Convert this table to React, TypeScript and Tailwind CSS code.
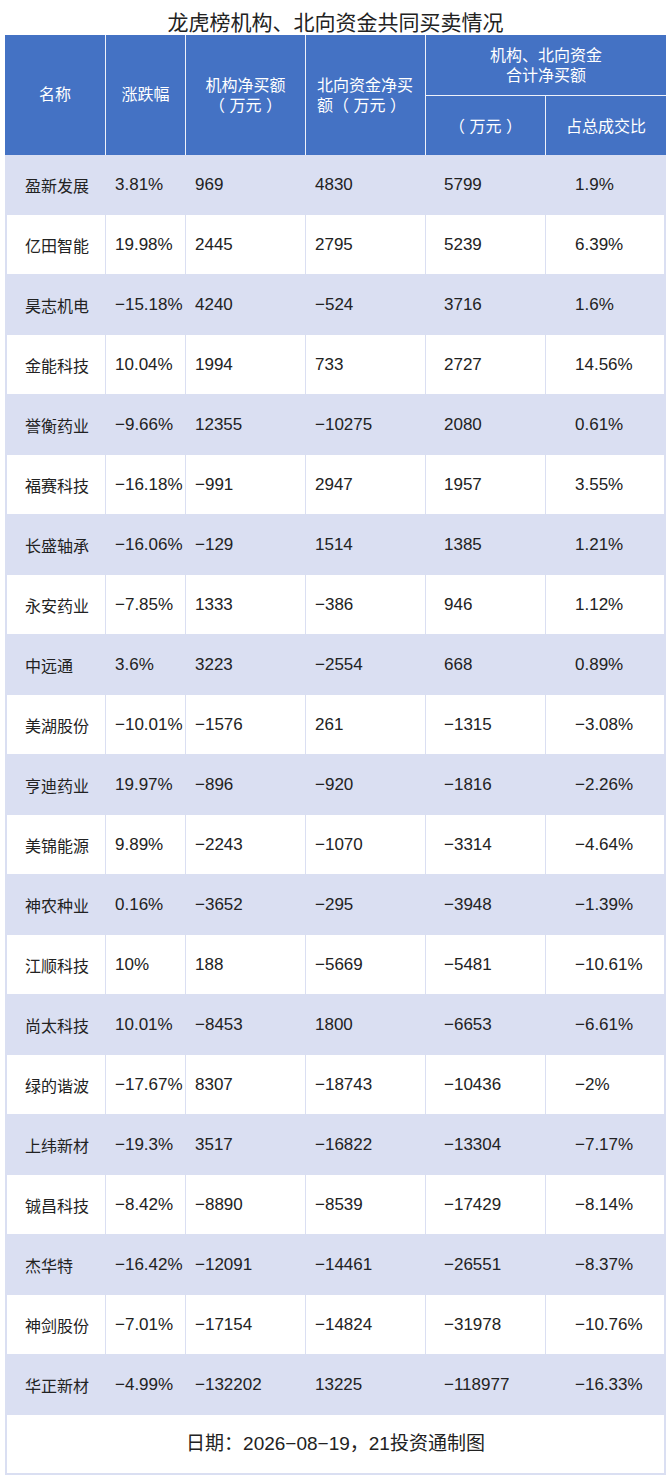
const rows: string[][] = [
  ['盈新发展', '3.81%', '969', '4830', '5799', '1.9%'],
  ['亿田智能', '19.98%', '2445', '2795', '5239', '6.39%'],
  ['昊志机电', '−15.18%', '4240', '−524', '3716', '1.6%'],
  ['金能科技', '10.04%', '1994', '733', '2727', '14.56%'],
  ['誉衡药业', '−9.66%', '12355', '−10275', '2080', '0.61%'],
  ['福赛科技', '−16.18%', '−991', '2947', '1957', '3.55%'],
  ['长盛轴承', '−16.06%', '−129', '1514', '1385', '1.21%'],
  ['永安药业', '−7.85%', '1333', '−386', '946', '1.12%'],
  ['中远通', '3.6%', '3223', '−2554', '668', '0.89%'],
  ['美湖股份', '−10.01%', '−1576', '261', '−1315', '−3.08%'],
  ['亨迪药业', '19.97%', '−896', '−920', '−1816', '−2.26%'],
  ['美锦能源', '9.89%', '−2243', '−1070', '−3314', '−4.64%'],
  ['神农种业', '0.16%', '−3652', '−295', '−3948', '−1.39%'],
  ['江顺科技', '10%', '188', '−5669', '−5481', '−10.61%'],
  ['尚太科技', '10.01%', '−8453', '1800', '−6653', '−6.61%'],
  ['绿的谐波', '−17.67%', '8307', '−18743', '−10436', '−2%'],
  ['上纬新材', '−19.3%', '3517', '−16822', '−13304', '−7.17%'],
  ['铖昌科技', '−8.42%', '−8890', '−8539', '−17429', '−8.14%'],
  ['杰华特', '−16.42%', '−12091', '−14461', '−26551', '−8.37%'],
  ['神剑股份', '−7.01%', '−17154', '−14824', '−31978', '−10.76%'],
  ['华正新材', '−4.99%', '−132202', '13225', '−118977', '−16.33%'],
]

// left padding per column, measured from the picture
const pads = ['pl-[18px]', 'pl-[9px]', 'pl-[9px]', 'pl-[9px]', 'pl-[18px]', 'pl-[29px]']

const font = { fontFamily: '"Liberation Sans", "Noto Sans CJK SC", sans-serif' }

export default function App() {
  return (
    <div className="w-[670px] min-h-[1480px] bg-white" style={font}>
      <div className="w-[661px] ml-[5px]">
        {/* Title */}
        <div className="h-[35px] flex items-end justify-center text-[21px] leading-[24px] text-[#222]">
          龙虎榜机构、北向资金共同买卖情况
        </div>

        {/* Header */}
        <div className="grid grid-cols-[100px_79px_119px_119px_119px_120px] grid-rows-[60px_59px] gap-px bg-[#eef1fa] text-white text-[16px] leading-[20px]">
          <div className="row-span-2 bg-[#4472c4] flex items-center justify-center">名称</div>
          <div className="row-span-2 bg-[#4472c4] flex items-center justify-center">涨跌幅</div>
          <div className="row-span-2 bg-[#4472c4] flex flex-col items-center justify-center pt-[2px]">
            <span>机构净买额</span>
            <span className="whitespace-pre">（ 万元 ）</span>
          </div>
          <div className="row-span-2 bg-[#4472c4] flex flex-col justify-center pl-[11px] pr-[10px] pt-[2px]">
            <span>北向资金净买</span>
            <span className="whitespace-pre">额（ 万元 ）</span>
          </div>
          <div className="col-span-2 bg-[#4472c4] flex flex-col items-center justify-center pt-[2px]">
            <span>机构、北向资金</span>
            <span>合计净买额</span>
          </div>
          <div className="bg-[#4472c4] flex items-center justify-center pt-[2px] whitespace-pre">（ 万元 ）</div>
          <div className="bg-[#4472c4] flex items-center justify-center pt-[2px]">占总成交比</div>
        </div>

        {/* Body */}
        <div className="bg-[#dadff2] px-[2px] pb-[2px] flex flex-col gap-px">
          {rows.map((r, i) => (
            <div key={r[0]} className="grid grid-cols-[98px_79px_119px_119px_119px_118px] gap-px h-[59px]">
              {r.map((v, j) => (
                <div
                  key={j}
                  className={`flex items-center whitespace-nowrap text-[#222] ${pads[j]} ${
                    i % 2 === 1 ? 'bg-white' : ''
                  } ${j === 0 ? 'text-[16px] pt-[4px]' : 'text-[17px]'}`}
                >
                  {v}
                </div>
              ))}
            </div>
          ))}
          <div className="h-[58px] bg-white flex items-center justify-center text-[19px] text-[#222]">
            日期：2026−08−19，21投资通制图
          </div>
        </div>
      </div>
    </div>
  )
}
